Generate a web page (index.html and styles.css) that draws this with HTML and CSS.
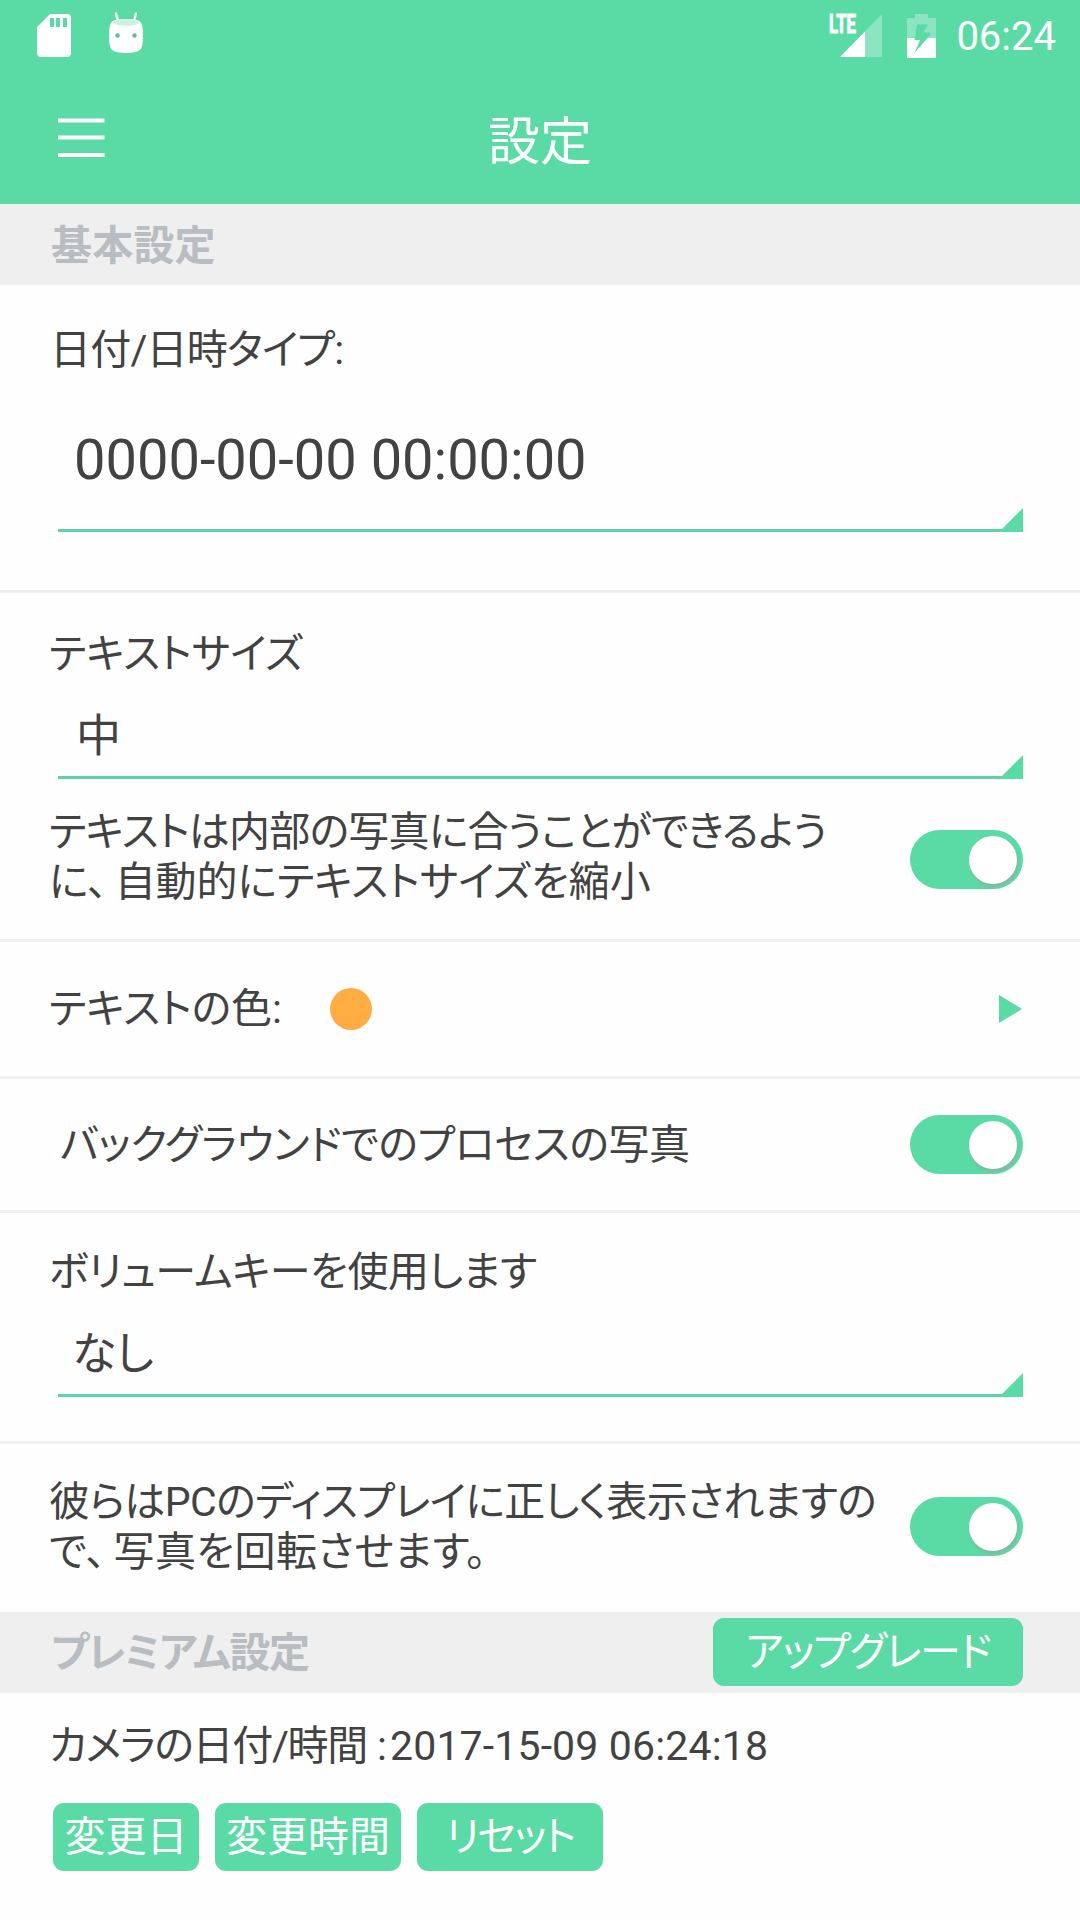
FILE: index.html
```
<!DOCTYPE html>
<html lang="ja">
  <head>
    <meta charset="UTF-8" />
    <meta name="viewport" content="width=device-width, initial-scale=1.0" />
    <title>設定</title>
    <link rel="stylesheet" href="styles.css">
  </head>
  <body>
    <header class="header">
      <div class="status-bar">
        <svg class="icon-sd" width="34" height="43" viewBox="0 0 34 43">
          <path fill="#fff" fill-rule="evenodd" d="M13 0H30Q34 0 34 4V39Q34 43 30 43H4Q0 43 0 39V13ZM13 4V13H17V4ZM19 4V13H23V4ZM26 4V13H30V4Z" />
        </svg>
        <svg class="icon-android" width="34" height="42" viewBox="0 0 34 42">
          <path d="M7 1.5L9.500 11M27 1.500L24.500 11" stroke="#fff" stroke-width="2.400" stroke-linecap="round" />
          <path fill="#fff" d="M2 11Q3 7 17 7T32 11Q34 13 34 24Q34 35 31 38Q27 41 17 41T3 38Q0 35 0 24Q0 13 2 11Z" />
          <ellipse cx="17" cy="10.500" rx="13" ry="3.300" fill="#c9f2e0" />
          <circle cx="8.500" cy="23.500" r="2.200" fill="#5bc09a" />
          <circle cx="25.500" cy="23.500" r="2.200" fill="#5bc09a" />
        </svg>
        <svg class="icon-signal" width="56" height="44" viewBox="-2 0 56 44">
          <path d="M53 0V43H11Z" fill="#fff" fill-opacity=".3" />
          <path d="M36 17.500V43H11Z" fill="#fff" />
          <text class="lte" x="0" y="19" textLength="27" lengthAdjust="spacingAndGlyphs">LTE</text>
        </svg>
        <svg class="icon-battery" width="29" height="44" viewBox="0 0 29 44">
          <path d="M8 0H21V4H29V24H0V4H8Z" fill="#fff" fill-opacity=".3" />
          <path d="M0 24H29V44H0Z" fill="#fff" />
          <path d="M10 10.500H21L16 18.500H23V21L7.500 39L13 26H7.500Z" fill="#5adaa5" />
        </svg>
        <span class="clock">06:24</span>
      </div>
      <div class="title-bar">
        <svg class="icon-menu" width="50" height="40" viewBox="0 0 50 40">
          <path d="M3 2.500H49.500M3 19.500H49.500M3 37H49.500" stroke="#fff" stroke-width="4" />
        </svg>
        <h1 class="title">設定</h1>
      </div>
    </header>

    <main>
      <div class="section-head">
        <h2>基本設定</h2>
      </div>

      <section class="row row-date">
        <p class="label tight">日付/日時タイプ:</p>
        <div class="spinner spinner-date">0000-00-00 00:00:00</div>
      </section>

      <section class="row row-size">
        <p class="label wide">テキストサイズ</p>
        <div class="spinner spinner-size">中</div>
        <div class="option">
          <p class="option-text"><span class="fit">テキストは内部の写真に合うことができるよう</span><br><span class="wide">に<span class="comma">、</span>自動的にテキストサイズを縮小</span></p>
          <div class="toggle"></div>
        </div>
      </section>

      <section class="row row-color">
        <p class="label wide">テキストの色:</p>
        <div class="color-dot"></div>
        <div class="arrow"></div>
      </section>

      <section class="row row-background">
        <p class="label">バックグラウンドでのプロセスの写真</p>
        <div class="toggle"></div>
      </section>

      <section class="row row-volume">
        <p class="label">ボリュームキーを使用します</p>
        <div class="spinner spinner-volume">なし</div>
      </section>

      <section class="row row-rotate">
        <p class="option-text"><span class="fit-rotate">彼らはPCのディスプレイに正しく表示されますの</span><br><span class="wider">で<span class="comma">、</span>写真を回転させます。</span></p>
        <div class="toggle"></div>
      </section>

      <div class="section-head section-premium">
        <h2>プレミアム設定</h2>
        <button class="btn btn-upgrade">アップグレード</button>
      </div>

      <section class="camera">
        <p class="camera-time"><span class="camera-label">カメラの日付/時間<span class="colon">:</span></span><span>2017-15-09 06:24:18</span></p>
        <div class="buttons">
          <button class="btn btn-day">変更日</button>
          <button class="btn btn-time">変更時間</button>
          <button class="btn btn-reset">リセット</button>
        </div>
      </section>
    </main>
  </body>
</html>
```
FILE: styles.css
```
* {
  box-sizing: border-box;
  margin: 0;
  padding: 0;
}

body {
  height: 1920px;
  overflow: hidden;
  background-color: #fefefe;
  color: #424242;
  font-family: Roboto, "Noto Sans CJK JP", sans-serif;
  font-size: 41px;
  line-height: 50px;
  letter-spacing: -0.45px;
  font-feature-settings: "palt";
}

.header {
  height: 204px;
  background-color: #5adaa5;
  color: #fff;
}

.status-bar {
  display: flex;
  align-items: flex-start;
  height: 72px;
  padding: 0 24px 0 37px;
}

.icon-sd {
  margin-top: 14px;
}

.icon-android {
  margin: 12px 0 0 38px;
}

.icon-signal {
  margin: 14px 0 0 auto;
  overflow: visible;
}

.icon-battery {
  margin: 14px 0 0 24px;
}

.lte {
  fill: #fff;
  stroke: #fff;
  stroke-width: 1px;
  font: bold 25px Roboto, sans-serif;
  letter-spacing: 0;
}

.clock {
  margin: 12px 0 0 20px;
  font-size: 40px;
  letter-spacing: 0;
}

.title-bar {
  display: grid;
  grid-template-columns: 1fr auto 1fr;
  align-items: center;
  height: 132px;
  padding: 0 55px;
}

.title {
  padding-top: 9px;
  font-size: 52px;
  font-weight: 400;
  letter-spacing: 0;
}

.section-head {
  display: flex;
  align-items: center;
  justify-content: space-between;
  height: 81px;
  padding: 0 57px 0 51px;
  background-color: #efefef;
}

.section-head h2 {
  padding-top: 2px;
  color: #b9bcc0;
  font-size: 41px;
  font-weight: 700;
  letter-spacing: 0.2px;
}

.section-premium h2 {
  padding-top: 0;
  letter-spacing: -1.4px;
}

.row {
  padding: 0 57px 0 49px;
  border-bottom: 3px solid #efefef;
}

.label {
  white-space: nowrap;
}

.tight {
  letter-spacing: -0.8px;
}

.wide {
  letter-spacing: -0.05px;
}

.wider {
  letter-spacing: 0.4px;
}

.fit {
  letter-spacing: -0.75px;
}

.fit-rotate {
  letter-spacing: -0.6px;
}

.comma {
  margin-right: 7px;
}

.spinner {
  position: relative;
  margin-left: 9px;
  border-bottom: 3px solid #5fd3a8;
}

/* corner triangle of the dropdown */
.spinner::after {
  content: "";
  position: absolute;
  right: 0;
  bottom: -3px;
  width: 24px;
  height: 24px;
  background-color: #5adaa5;
  clip-path: polygon(100% 0, 100% 100%, 0 100%);
}

.row-date {
  height: 308px;
  padding-top: 40px;
}

.row-date .label {
  padding-left: 1px;
}

.spinner-date {
  height: 157px;
  padding: 45px 0 0 16px;
  font-size: 56px;
  line-height: 80px;
  letter-spacing: 0;
}

.row-size {
  height: 349px;
  padding-top: 36px;
}

.spinner-size,
.spinner-volume {
  height: 100px;
  padding: 28px 0 0 18px;
  font-size: 45px;
  line-height: 60px;
}

.option {
  display: flex;
  justify-content: space-between;
  align-items: center;
  height: 160px;
}

.option-text {
  padding-bottom: 4px;
  white-space: nowrap;
}

.toggle {
  position: relative;
  flex: none;
  width: 113px;
  height: 59px;
  border-radius: 30px;
  background-color: #5adaa5;
}

.toggle::after {
  content: "";
  position: absolute;
  top: 6px;
  right: 6px;
  width: 48px;
  height: 48px;
  border-radius: 50%;
  background-color: #fff;
  box-shadow: 1px 3px 3px rgba(160, 160, 160, 0.6);
}

.row-color,
.row-background,
.row-rotate {
  display: flex;
  align-items: center;
}

.row-color {
  height: 137px;
}

.color-dot {
  width: 42px;
  height: 42px;
  margin-left: 48px;
  border-radius: 50%;
  background-color: #ffac42;
}

.arrow {
  width: 23px;
  height: 28px;
  margin: 0 1px 0 auto;
  background-color: #5adaa5;
  clip-path: polygon(0 0, 100% 50%, 0 100%);
}

.row-background {
  justify-content: space-between;
  height: 134px;
  padding-left: 60px;
}

.row-volume {
  height: 231px;
  padding-top: 34px;
}

.spinner-volume {
  padding-left: 14px;
}

.row-rotate {
  justify-content: space-between;
  height: 168px;
  padding-bottom: 3px;
  border-bottom: none;
}

.row-rotate .option-text {
  padding-bottom: 0;
}

.btn {
  height: 68px;
  border: none;
  border-radius: 11px;
  background-color: #5adaa5;
  color: #fff;
  font: inherit;
  letter-spacing: 0;
  white-space: nowrap;
}

.btn-upgrade {
  width: 310px;
  margin-bottom: 1px;
  letter-spacing: -1.3px;
}

.camera {
  padding: 28px 49px 0;
}

.camera-time {
  display: flex;
  letter-spacing: 0.15px;
  white-space: nowrap;
}

.camera-label {
  width: 341px;
  letter-spacing: -1.3px;
}

.colon {
  margin-left: 10px;
}

.buttons {
  display: flex;
  gap: 16px;
  margin: 32px 0 0 4px;
}

.btn-day {
  width: 146px;
}

.btn-time {
  width: 186px;
}

.btn-reset {
  width: 186px;
  letter-spacing: -2px;
}
```
